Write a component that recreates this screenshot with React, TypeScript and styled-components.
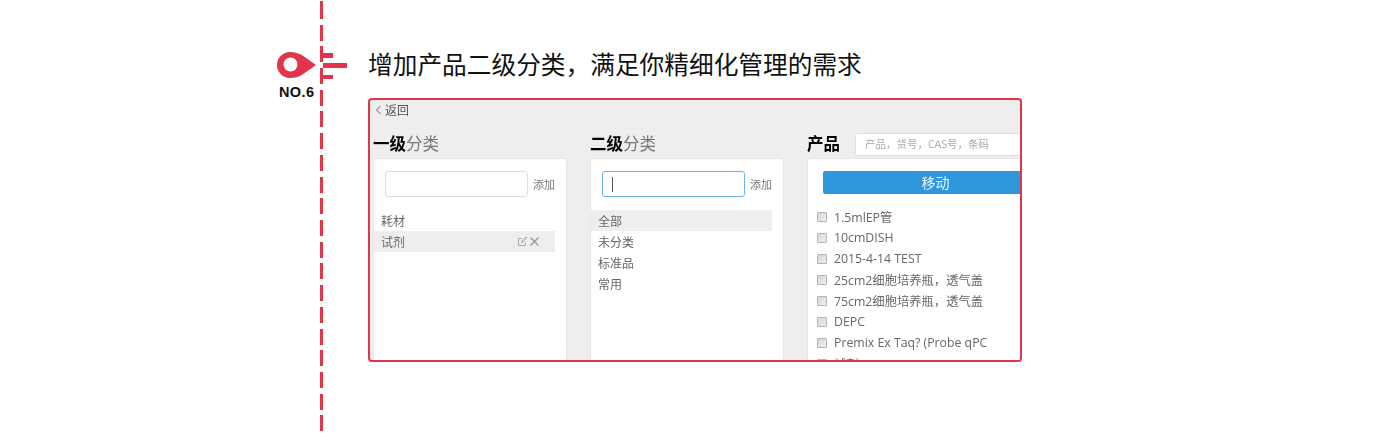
import React from "react";
import styled, { createGlobalStyle } from "styled-components";

const CJK = `"Noto Sans CJK SC", sans-serif`;
const UI = `"Open Sans", "Noto Sans CJK SC", sans-serif`;
const RED = "#e0354b";

const Global = createGlobalStyle`
  html, body { margin: 0; padding: 0; background: #fff; }
  body { width: 1400px; height: 436px; overflow: hidden; }
`;

const Page = styled.div`
  position: relative;
  width: 1400px;
  height: 436px;
  padding: 0 0 0 320px;
  box-sizing: border-box;
  display: flex;
  background: #fff;
`;

const Rail = styled.div`
  position: relative;
  flex: 0 0 3px;
  height: 436px;
  background: repeating-linear-gradient(to bottom, ${RED} 0 16px, transparent 16px 21.7px);
  background-position: 0 3px;
`;

const PinMark = styled.svg`
  position: absolute;
  left: -43px;
  top: 51px;
`;

const Ticks = styled.svg`
  position: absolute;
  left: 3px;
  top: 53px;
`;

const No = styled.div`
  position: absolute;
  left: -41px;
  top: 84px;
  font: 700 14.5px/16px "Liberation Sans", sans-serif;
  letter-spacing: 0.4px;
  color: #111;
`;

const Main = styled.main`
  margin-left: 45px;
  display: flex;
  flex-direction: column;
  align-items: flex-start;
`;

const Title = styled.h1`
  margin: 46px 0 0 0;
  font: 400 24.7px/34px ${CJK};
  color: #111;
  white-space: nowrap;
`;

const Frame = styled.section`
  margin-top: 18px;
  width: 654px;
  height: 264px;
  box-sizing: border-box;
  border: 2px solid ${RED};
  border-radius: 4px;
  background: #eee;
  overflow: hidden;
  font-family: ${UI};
  color: #666;
`;

const Soft = styled.div`
  filter: blur(0.3px);
`;

const Back = styled.div`
  display: flex;
  align-items: center;
  gap: 3px;
  height: 20px;
  padding-left: 5px;
  font-size: 12px;
  color: #555;
`;

const Columns = styled.div`
  display: flex;
  gap: 23px;
  padding: 12px 0 0 3px;
`;

const Column = styled.div<{ $wide?: boolean }>`
  flex: 0 0 ${(p) => (p.$wide ? "240px" : "194px")};
  display: flex;
  flex-direction: column;
`;

const HeadRow = styled.div`
  display: flex;
  align-items: flex-start;
  height: 26px;
`;

const Heading = styled.h2`
  margin: 0;
  font: 400 16.5px/22px ${CJK};
  color: #777;
  white-space: nowrap;
  b { font-weight: 700; color: #000; }
`;

const Search = styled.div`
  margin: 1px 0 0 15px;
  width: 200px;
  height: 23px;
  box-sizing: border-box;
  padding-left: 9px;
  border: 1px solid #ddd;
  border-radius: 3px;
  background: #fff;
  font-size: 10.5px;
  line-height: 21px;
  color: #aaa;
  white-space: nowrap;
`;

const Card = styled.div`
  height: 220px;
  box-sizing: border-box;
  background: #fff;
  border: 1px solid #e6e6e6;
  border-radius: 3px;
  padding-top: 12px;
`;

const AddRow = styled.div`
  display: flex;
  align-items: center;
  height: 26px;
  padding-left: 11px;
  font-size: 11px;
  color: #777;
`;

const Field = styled.div<{ $focus?: boolean }>`
  width: 143px;
  height: 26px;
  box-sizing: border-box;
  margin-right: 5px;
  padding: 5px 0 0 9px;
  border: 1px solid ${(p) => (p.$focus ? "#6cb4e8" : "#ddd")};
  border-radius: 3px;
  background: #fff;
`;

const Caret = styled.div`
  width: 1px;
  height: 15px;
  background: #555;
`;

const List = styled.ul`
  list-style: none;
  margin: 13px 0 0;
  padding: 0;
  width: 181px;
`;

const Item = styled.li<{ $active?: boolean }>`
  display: flex;
  align-items: center;
  justify-content: space-between;
  height: 21px;
  padding: 0 15px 0 7px;
  font-size: 12px;
  color: #666;
  background: ${(p) => (p.$active ? "#eee" : "transparent")};
`;

const ItemTools = styled.span`
  display: flex;
  gap: 1px;
  margin-left: 2px;
  color: #aaa;
`;

const MoveBtn = styled.div`
  margin-left: 15px;
  width: 225px;
  height: 23px;
  background: #2f98dc;
  border-radius: 2px;
  color: #eaf4fb;
  font: 400 14px/23px ${CJK};
  text-align: center;
`;

const Checks = styled.ul`
  list-style: none;
  margin: 12px 0 0;
  padding: 0 0 0 9px;
`;

const Check = styled.li`
  display: flex;
  align-items: center;
  gap: 7px;
  height: 21px;
  font-size: 12.3px;
  color: #666;
  white-space: nowrap;
`;

const Box = styled.span`
  flex: 0 0 10px;
  width: 10px;
  height: 10px;
  box-sizing: border-box;
  border: 1px solid #b4b4b4;
  border-radius: 1px;
  background: linear-gradient(135deg, #d8d8d8, #eeeeee);
`;

const products = [
  "1.5mlEP管",
  "10cmDISH",
  "2015-4-14 TEST",
  "25cm2细胞培养瓶，透气盖",
  "75cm2细胞培养瓶，透气盖",
  "DEPC",
  "Premix Ex Taq? (Probe qPC",
  "试剂",
];

export default function App() {
  return (
    <Page>
      <Global />
      <Rail>
        <PinMark width="40" height="28" viewBox="0 0 40 28">
          <path d="M13 1C18 1 23 2.500 27 5.500L39 14L27 22.500C23 25.500 18 27 13 27A13 13 0 0 1 13 1Z" fill={RED} />
          <circle cx="13.500" cy="13.500" r="7" fill="#fff" />
        </PinMark>
        <Ticks width="24" height="27" viewBox="0 0 24 27">
          <rect x="0" y="0" width="10" height="5" fill={RED} />
          <rect x="0" y="10" width="24" height="5" fill={RED} />
          <rect x="0" y="22" width="10" height="4" fill={RED} />
        </Ticks>
        <No>NO.6</No>
      </Rail>
      <Main>
        <Title>增加产品二级分类，满足你精细化管理的需求</Title>
        <Frame>
          <Soft>
            <Back>
              <svg width="7" height="10" viewBox="0 0 7 10">
                <path d="M5.500 1L1.500 5L5.500 9" fill="none" stroke="#666" strokeWidth="1" />
              </svg>
              返回
            </Back>
            <Columns>
              <Column>
                <HeadRow>
                  <Heading><b>一级</b>分类</Heading>
                </HeadRow>
                <Card>
                  <AddRow>
                    <Field />
                    添加
                  </AddRow>
                  <List>
                    <Item>耗材</Item>
                    <Item $active>
                      试剂
                      <ItemTools>
                        <svg width="11" height="11" viewBox="0 0 11 11">
                          <path d="M8.500 6.500V9.500H1.500V2.500H5M4.500 6.800L5 5L9 1L10 2L6 6Z" fill="none" stroke="#aaa" />
                        </svg>
                        <svg width="11" height="11" viewBox="0 0 11 11">
                          <path d="M1.500 1.500L9.500 9.500M9.500 1.500L1.500 9.500" fill="none" stroke="#999" strokeWidth="1.400" />
                        </svg>
                      </ItemTools>
                    </Item>
                  </List>
                </Card>
              </Column>
              <Column>
                <HeadRow>
                  <Heading><b>二级</b>分类</Heading>
                </HeadRow>
                <Card>
                  <AddRow>
                    <Field $focus><Caret /></Field>
                    添加
                  </AddRow>
                  <List>
                    <Item $active>全部</Item>
                    <Item>未分类</Item>
                    <Item>标准品</Item>
                    <Item>常用</Item>
                  </List>
                </Card>
              </Column>
              <Column $wide>
                <HeadRow>
                  <Heading><b>产品</b></Heading>
                  <Search>产品，货号，CAS号，条码</Search>
                </HeadRow>
                <Card>
                  <MoveBtn>移动</MoveBtn>
                  <Checks>
                    {products.map((p) => (
                      <Check key={p}>
                        <Box />
                        {p}
                      </Check>
                    ))}
                  </Checks>
                </Card>
              </Column>
            </Columns>
          </Soft>
        </Frame>
      </Main>
    </Page>
  );
}
